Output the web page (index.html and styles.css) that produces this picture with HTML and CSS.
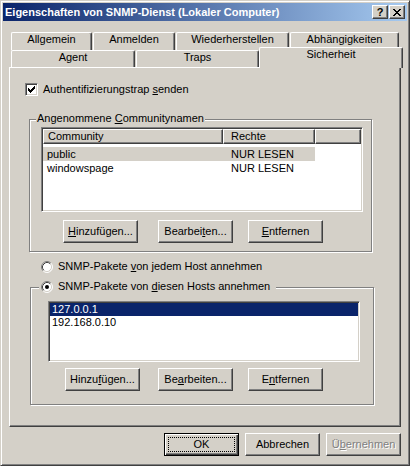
FILE: index.html
```html
<!DOCTYPE html>
<html>
<head>
 <title>Eigenschaften von SNMP-Dienst</title>
 <link rel="stylesheet" href="styles.css">
</head>
<body>
<div class="win">
  <div class="titlebar">
    <span class="title">Eigenschaften von SNMP-Dienst (Lokaler Computer)</span>
    <span class="tbtn help">?</span>
    <span class="tbtn close"><svg width="8" height="7" viewBox="0 0 8 7"><path d="M0 0h2v1H0zM6 0h2v1H6zM1 1h2v1H1zM5 1h2v1H5zM2 2h4v1H2zM3 3h2v1H3zM2 4h4v1H2zM1 5h2v1H1zM5 5h2v1H5zM0 6h2v1H0zM6 6h2v1H6z" fill="#000"/></svg></span>
  </div>

  <div class="tabs">
    <div class="tabrow back">
      <div class="tab t-allg">Allgemein</div>
      <div class="tab t-anm">Anmelden</div>
      <div class="tab t-wied">Wiederherstellen</div>
      <div class="tab t-abh">Abhängigkeiten</div>
    </div>
    <div class="tabrow front">
      <div class="tab t-agent">Agent</div>
      <div class="tab t-traps">Traps</div>
      <div class="tab t-sich sel">Sicherheit</div>
    </div>
  </div>

  <div class="panel">
    <div class="chkrow">
      <span class="chk"><svg width="7" height="7" viewBox="0 0 7 7"><path d="M0 2h1v3H0zM1 3h1v3H1zM2 4h1v3H2zM3 3h1v3H3zM4 2h1v3H4zM5 1h1v3H5zM6 0h1v3H6z" fill="#000"/></svg></span>
      <span class="lbl">Authentifizierungstrap <u>s</u>enden</span>
    </div>

    <div class="group g1">
      <div class="gtitle">Angenommene <u>C</u>ommunitynamen</div>
      <div class="lv">
        <div class="lvhead">
          <span class="hc c1">Community</span><span class="hc c2">Rechte</span><span class="hc c3"></span>
        </div>
        <div class="lvrows">
          <div class="lvrow sel"><span class="c1">public</span><span class="c2">NUR LESEN</span></div>
          <div class="lvrow"><span class="c1">windowspage</span><span class="c2">NUR LESEN</span></div>
        </div>
      </div>
      <div class="btnrow r1">
        <span class="btn"><u>H</u>inzufügen...</span>
        <span class="btn b2">Bearbei<u>t</u>en...</span>
        <span class="btn b3"><u>E</u>ntfernen</span>
      </div>
    </div>

    <div class="radrow">
      <svg class="rad" width="12" height="12" viewBox="0 0 12 12">
        <circle cx="6" cy="6" r="5" fill="#fff"/>
        <path d="M2.11 9.89A5.5 5.5 0 0 1 9.89 2.11" fill="none" stroke="#808080"/>
        <path d="M9.89 2.11A5.5 5.5 0 0 1 2.11 9.89" fill="none" stroke="#fff"/>
        <path d="M2.82 9.18A4.5 4.5 0 0 1 9.18 2.82" fill="none" stroke="#404040"/>
        <path d="M9.18 2.82A4.5 4.5 0 0 1 2.82 9.18" fill="none" stroke="#d4d0c8"/>
      </svg>
      <span class="lbl">SNMP-Pakete <u>v</u>on jedem Host annehmen</span>
    </div>

    <div class="group g2">
      <div class="gtitle radrow">
        <svg class="rad" width="12" height="12" viewBox="0 0 12 12">
          <circle cx="6" cy="6" r="5" fill="#fff"/>
          <path d="M2.11 9.89A5.5 5.5 0 0 1 9.89 2.11" fill="none" stroke="#808080"/>
          <path d="M9.89 2.11A5.5 5.5 0 0 1 2.11 9.89" fill="none" stroke="#fff"/>
          <path d="M2.82 9.18A4.5 4.5 0 0 1 9.18 2.82" fill="none" stroke="#404040"/>
          <path d="M9.18 2.82A4.5 4.5 0 0 1 2.82 9.18" fill="none" stroke="#d4d0c8"/>
          <circle cx="6" cy="6" r="2" fill="#000"/>
        </svg>
        <span class="lbl">SNMP-Pakete von <u>d</u>iesen Hosts annehmen</span>
      </div>
      <div class="lb">
        <div class="lbrow sel">127.0.0.1</div>
        <div class="lbrow">192.168.0.10</div>
      </div>
      <div class="btnrow r2">
        <span class="btn">Hinzu<u>f</u>ügen...</span>
        <span class="btn b2">Be<u>a</u>rbeiten...</span>
        <span class="btn b3">E<u>n</u>tfernen</span>
      </div>
    </div>
  </div>

  <div class="footer">
    <span class="btn def"><span class="focus">OK</span></span>
    <span class="btn">Abbrechen</span>
    <span class="btn off">Ü<u>b</u>ernehmen</span>
  </div>
</div>
</body>
</html>
```

FILE: styles.css
```css
body{margin:0;background:#d4d0c8;font:11px "Liberation Sans",Arial,sans-serif;color:#000;}

.win{width:410px;height:466px;box-sizing:border-box;padding:2px;background:#d4d0c8;
  border:1px solid;border-color:#d4d0c8 #404040 #404040 #d4d0c8;
  box-shadow:inset 1px 1px #fff,inset -1px -1px #808080;}

/* title bar */
.titlebar{height:18px;display:flex;align-items:center;background:linear-gradient(to right,#0a246a,#a6caf0);}
.title{flex:1;padding-left:2px;color:#fff;font-weight:bold;line-height:13px;white-space:nowrap;}
.tbtn{width:16px;height:14px;box-sizing:border-box;background:#d4d0c8;
  border:1px solid;border-color:#fff #404040 #404040 #fff;box-shadow:inset -1px -1px #808080;
  display:flex;align-items:center;justify-content:center;font-weight:bold;line-height:12px;}
.tbtn.help{margin-right:1px;}
.tbtn.close{margin-right:2px;}

/* tabs */
.tabs{margin:11px 0 0 8px;}
.tabrow{display:flex;gap:1px;}
.tabrow.back{height:18px;}
.tabrow.front{height:17px;}
.tab{box-sizing:border-box;background:#d4d0c8;text-align:center;line-height:13px;white-space:nowrap;
  border:1px solid;border-bottom:0;border-color:#fff #404040 #fff #fff;
  box-shadow:inset -1px 0 #808080;border-radius:2px 2px 0 0;}
.back .tab{height:18px;}
.front .tab{height:17px;}
.tab.sel{position:relative;z-index:1;height:21px;margin:-3px 0 0 -1px;}
.t-allg{width:81px;}
.t-anm{width:82px;}
.t-wied{width:113px;}
.t-abh{width:109px;}
.t-agent{width:124px;}
.t-traps{width:123px;}
.t-sich{width:144px;}

/* page */
.panel{margin-left:6px;width:392px;height:360px;box-sizing:border-box;
  border:1px solid;border-color:#fff #404040 #404040 #fff;box-shadow:inset -1px -1px #808080;
  display:flex;flex-direction:column;align-items:flex-start;}
.lbl{line-height:13px;white-space:nowrap;}

.chkrow{display:flex;align-items:center;height:13px;margin:15px 0 0 15px;}
.chk{width:13px;height:13px;box-sizing:border-box;background:#fff;margin-right:5px;
  border:1px solid;border-color:#808080 #fff #fff #808080;
  box-shadow:inset 1px 1px #404040,inset -1px -1px #d4d0c8;
  display:flex;align-items:center;justify-content:center;}

.group{box-sizing:border-box;border:1px solid #808080;box-shadow:inset 1px 1px #fff,1px 1px #fff;
  display:flex;flex-direction:column;align-items:flex-start;}
.gtitle{background:#d4d0c8;line-height:13px;white-space:nowrap;margin-top:-8px;}
.g1{width:343px;margin:23px 0 0 19px;padding-bottom:8px;}
.g1 .gtitle{margin-left:6px;padding:0 1px;}
.g2{width:344px;margin:14px 0 0 20px;padding-bottom:13px;}
.g2 .gtitle{margin-left:8px;padding:0 6px 0 2px;}

.radrow{display:flex;align-items:center;height:13px;}
.panel > .radrow{margin:8px 0 0 31px;}
.rad{margin-right:5px;flex:none;}

/* list view */
.lv,.lb{box-sizing:border-box;background:#fff;padding:1px;
  border:1px solid;border-color:#808080 #fff #fff #808080;
  box-shadow:inset 1px 1px #404040,inset -1px -1px #d4d0c8;}
.lv{width:322px;height:85px;margin:2px 0 0 11px;}
.lvhead{display:flex;height:15px;}
.hc{box-sizing:border-box;background:#d4d0c8;line-height:13px;
  border:1px solid;border-color:#fff #404040 #404040 #fff;box-shadow:inset -1px -1px #808080;}
.hc.c1{width:180px;padding-left:4px;}
.hc.c2{width:92px;padding-left:7px;}
.hc.c3{flex:1;}
.lvrows{padding-top:3px;}
.lvrow{display:flex;width:272px;height:14px;line-height:14px;}
.lvrow.sel{background:#d4d0c8;}
.lvrow .c1{width:180px;padding-left:4px;box-sizing:border-box;}
.lvrow .c2{padding-left:8px;}

.lb{width:312px;height:61px;margin:8px 0 0 17px;}
.lbrow{height:13px;line-height:13px;padding-left:2px;}
.lbrow.sel{background:#0a246a;color:#fff;}

/* buttons */
.btnrow{display:flex;}
.btnrow.r1{margin:8px 0 0 33px;}
.btnrow.r1 .b2{margin-left:20px;}
.btnrow.r1 .b3{margin-left:15px;}
.btnrow.r2{margin:6px 0 0 34px;}
.btnrow.r2 .b2{margin-left:18px;}
.btnrow.r2 .b3{margin-left:15px;}
.btn{width:75px;height:23px;box-sizing:border-box;display:flex;align-items:center;justify-content:center;
  line-height:13px;white-space:nowrap;background:#d4d0c8;
  border:1px solid;border-color:#fff #404040 #404040 #fff;box-shadow:inset -1px -1px #808080;}
.btn.def{border-color:#000;box-shadow:inset 1px 1px #fff,inset -1px -1px #404040,inset -2px -2px #808080;align-items:stretch;}
.focus{flex:1;margin:3px;border:1px dotted #000;display:flex;align-items:center;justify-content:center;}
.btn.off{color:#808080;text-shadow:1px 1px #fff;}

.footer{display:flex;justify-content:flex-end;gap:6px;margin:6px 6px 0 0;}
```
